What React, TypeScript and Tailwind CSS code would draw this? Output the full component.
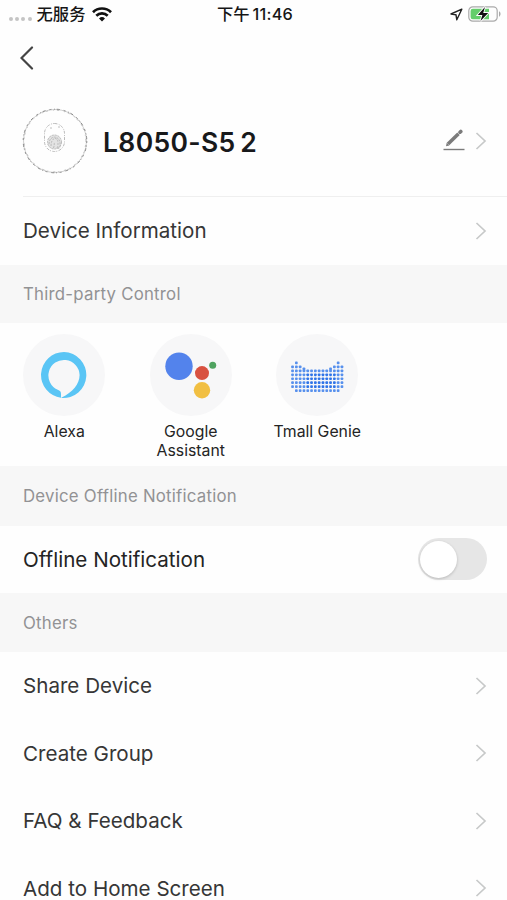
import { useState } from 'react';

interface RowProps {
  label: string;
}

interface SectionTitleProps {
  title: string;
  className: string;
}

interface AssistantProps {
  name: string;
  children: React.ReactNode;
}

const otherItems = ['Share Device', 'Create Group', 'FAQ & Feedback', 'Add to Home Screen'];

// first row of each dot column in the Tmall Genie logo
const tmallColumns = [1, 0, 1, 1.5, 2, 2, 2, 2, 2, 2, 1.5, 1, 0, 1];

const ChevronRight = () => (
  <svg width="12" height="18" viewBox="0 0 12 18" fill="none" stroke="#c7c9c9" strokeWidth="1.7">
    <path d="M1.5 1l8.5 8-8.5 8" />
  </svg>
);

const StatusBar = () => (
  <div className="grid h-7 grid-cols-[1fr_auto_1fr] items-center pl-[9px] pr-[6px] text-[#161616]">
    <div className="flex items-center">
      <div className="mt-[9px] flex gap-[2.2px]">
        {[0, 1, 2, 3].map((dot) => (
          <span key={dot} className="size-[4px] rounded-full bg-[#c4c4c4]" />
        ))}
      </div>
      <span className="ml-[5px] text-[16.3px] font-medium leading-7">无服务</span>
      <svg className="ml-[7px]" width="20" height="15" viewBox="0 0 20 15" fill="none" stroke="#111" strokeWidth="2.7">
        <path d="M1 5.2a12.8 12.8 0 0 1 18 0" />
        <path d="M4.3 8.7a8.1 8.1 0 0 1 11.4 0" />
        <path d="M10 14.6l-3-3.1a4.4 4.4 0 0 1 6 0z" fill="#111" stroke="none" />
      </svg>
    </div>
    <span className="text-[16.3px] font-medium leading-7">
      下午<span className="ml-[3px] tracking-[0.2px]">11:46</span>
    </span>
    <div className="flex items-center justify-end gap-[5px]">
      <svg width="13" height="13" viewBox="0 0 13 13" fill="none" stroke="#222" strokeWidth="1.4" strokeLinejoin="round">
        <path d="M11.8 1.2L1 6l5 .8.8 5z" />
      </svg>
      <svg width="33" height="16" viewBox="0 0 33 16" fill="none">
        <rect x=".8" y=".8" width="28.4" height="14.4" rx="4" stroke="#aaa" strokeWidth="1.2" />
        <path d="M4.8 2.7H21v10.6H4.8a2.2 2.2 0 0 1-2.2-2.2V4.9a2.2 2.2 0 0 1 2.2-2.2z" fill="#65ce6b" />
        <path d="M31 5.3c2 .8 2 4.6 0 5.4z" fill="#aaa" />
        <path d="M17 .9L9.8 9h4.6l-1.900 6.100L20.200 7h-5z" fill="#111" stroke="#fefefe" strokeWidth="1.800" paintOrder="stroke" />
      </svg>
    </div>
  </div>
);

const DeviceIcon = () => (
  <svg width="66" height="66" viewBox="0 0 66 66" fill="none">
    <circle cx="33" cy="33" r="31.5" stroke="#d0d0d0" strokeWidth="1" />
    <circle cx="33" cy="33" r="31.8" stroke="#8a8a8a" strokeWidth="1" strokeDasharray="2 2.6 1 1.8 3 4" />
    <circle cx="33" cy="33" r="30.8" stroke="#b5b5b5" strokeWidth=".8" strokeDasharray="1 3 2 5" />
    <rect x="22.5" y="15.5" width="20" height="28" rx="10" stroke="#aaa" strokeWidth=".8" strokeDasharray="3 1.4 1 1" />
    <circle cx="32.5" cy="34" r="7.3" fill="#e3e3e3" />
    <g stroke="#b0b0b0" strokeWidth=".8" strokeDasharray="2 1">
      <circle cx="32.5" cy="34" r="7" />
      <path d="M27 36c0-9 10.5-9 11-1s-2 5-3 5" />
      <path d="M29 38c0-9 7-10 7-3s-1 4-2 5" />
      <path d="M31.5 40c1-3 .5-4 1-6" />
      <path d="M28 20h3M36 19h2" />
    </g>
  </svg>
);

const AlexaLogo = () => (
  <svg width="46" height="46" viewBox="0 0 46 46">
    <path
      d="M23 0a23 23 0 0 0-3 45.8v-3.800c0-2.500-1-3.300-3.300-4.200A15.600 15.600 0 1 1 38.600 23c0 9-7 17.500-18 22.400l-.3.500A23 23 0 1 0 23 0z"
      fill="#5ac5f5"
    />
  </svg>
);

const GoogleAssistantLogo = () => (
  <svg width="52" height="48" viewBox="0 0 52 48">
    <circle cx="14" cy="15.3" r="13.7" fill="#5383ec" />
    <circle cx="37" cy="22.1" r="7" fill="#d85140" />
    <circle cx="47.7" cy="14.3" r="3.5" fill="#4fa360" />
    <circle cx="37" cy="39.3" r="8.2" fill="#f1bf42" />
  </svg>
);

const TmallGenieLogo = () => (
  <svg className="mt-[4px]" width="54" height="32" viewBox="0 0 54 32">
    {tmallColumns.map((first, col) => {
      const last = col === 0 || col === 13 ? 7 : 8;
      return Array.from({ length: 8 }, (_, row) => row)
        .filter((row) => row >= Math.floor(first) && row < last)
        .map((row) => (
          <rect
            key={`${col}-${row}`}
            x={1.2 + col * 3.8}
            y={0.6 + Math.max(row, first) * 3.95}
            width="2.7"
            height="2.7"
            rx=".8"
            fill={col > 3 && col < 12 && row > 2 && row < 7 ? '#2f74e8' : '#5790ed'}
          />
        ));
    })}
  </svg>
);

const SectionTitle = ({ title, className }: SectionTitleProps) => (
  <div className={`flex items-center bg-[#f7f7f7] pl-[23px] pt-[2px] text-[#929294] ${className}`}>
    <span className="text-[16.8px] tracking-[0.24px]">{title}</span>
  </div>
);

const Row = ({ label }: RowProps) => (
  <button type="button" className="flex h-[67.5px] w-full items-center justify-between pl-[23px] pr-[20px] text-left">
    <span className="mt-[2px] text-[20.6px] text-[#363636]">{label}</span>
    <ChevronRight />
  </button>
);

const Assistant = ({ name, children }: AssistantProps) => (
  <div className="flex w-[126.5px] flex-col items-center">
    <div className="flex size-[82px] items-center justify-center rounded-full bg-[#f7f7f8]">{children}</div>
    <span className="mt-[6px] w-[100px] text-center text-[15.8px] leading-[19px] text-[#242424]">{name}</span>
  </div>
);

const App = () => {
  const [offlineNotification, setOfflineNotification] = useState(false);

  return (
    <div className="h-[900px] w-[507px] overflow-hidden bg-[#fefefe] font-['Inter','Noto_Sans_CJK_SC',sans-serif]">
      <StatusBar />

      <div className="flex h-[58px] items-center pl-[20px] pt-[2px]">
        <button type="button" aria-label="Back">
          <svg width="14" height="24" viewBox="0 0 14 24" fill="none" stroke="#444" strokeWidth="2.2" strokeLinecap="round">
            <path d="M12 1.5L1.5 12 12 22.5" />
          </svg>
        </button>
      </div>

      <div className="flex h-[110px] items-center pl-[22px] pr-[20px]">
        <DeviceIcon />
        <h1 className="ml-[15px] mt-[3px] flex-1 text-[26.5px] font-semibold tracking-[0.35px] text-[#18191b] [word-spacing:-2.5px]">
          L8050-S5 2
        </h1>
        <svg className="mb-[2px] mr-[10px]" width="22" height="22" viewBox="0 0 22 22" fill="none" stroke="#7b7b7b">
          <path d="M5 15L15.500 4.700" strokeWidth="3.6" />
          <path d="M17 3.200l.8-.8" strokeWidth="3.6" strokeLinecap="round" />
          <path d="M3 17.200l.7-3.500 2.700 2.700z" fill="#7b7b7b" stroke="none" />
          <path d="M.5 20.500h21" strokeWidth="1.4" />
        </svg>
        <ChevronRight />
      </div>

      <div className="ml-[23px] h-px bg-[#efefef]" />
      <Row label="Device Information" />

      <SectionTitle title="Third-party Control" className="h-[58.5px]" />
      <div className="flex h-[143px] pl-[1px] pt-[11px]">
        <Assistant name="Alexa">
          <AlexaLogo />
        </Assistant>
        <Assistant name="Google Assistant">
          <GoogleAssistantLogo />
        </Assistant>
        <Assistant name="Tmall Genie">
          <TmallGenieLogo />
        </Assistant>
      </div>

      <SectionTitle title="Device Offline Notification" className="h-[60px]" />
      <div className="flex h-[67px] items-center justify-between pl-[23px] pr-[20px]">
        <span className="mt-[1px] text-[20.6px] text-[#242424]">Offline Notification</span>
        <button
          type="button"
          role="switch"
          aria-checked={offlineNotification}
          aria-label="Offline Notification"
          onClick={() => setOfflineNotification(!offlineNotification)}
          className={`mb-[1px] flex h-[42px] w-[69px] items-center rounded-full p-[2px] ${
            offlineNotification ? 'justify-end bg-[#65ce6b]' : 'bg-[#e6e6e6]'
          }`}
        >
          <span className="size-[37px] rounded-full bg-white shadow-[0_1px_3px_rgba(0,0,0,0.2)]" />
        </button>
      </div>

      <SectionTitle title="Others" className="h-[59px]" />
      {otherItems.map((item) => (
        <Row key={item} label={item} />
      ))}
    </div>
  );
};

export default App;
